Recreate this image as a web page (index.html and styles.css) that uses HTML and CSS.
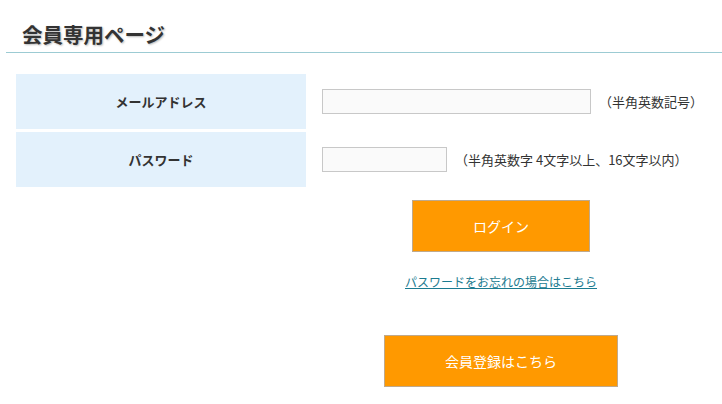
FILE: index.html
```html
<!DOCTYPE html>
<html lang="ja">
<head>
<meta charset="utf-8">
<link rel="stylesheet" href="styles.css">
</head>
<body>
<div class="page">
  <h1 class="title">会員専用ページ</h1>
  <div class="form">
    <div class="row">
      <div class="label">メールアドレス</div>
      <div class="field">
        <span class="input input-wide"></span>
        <span class="hint">（半角英数記号）</span>
      </div>
    </div>
    <div class="row">
      <div class="label">パスワード</div>
      <div class="field">
        <span class="input input-short"></span>
        <span class="hint">（半角英数字 4文字以上、16文字以内）</span>
      </div>
    </div>
  </div>
  <div class="actions">
    <div class="btn btn-login">ログイン</div>
    <a class="forgot" href="#">パスワードをお忘れの場合はこちら</a>
    <div class="btn btn-register">会員登録はこちら</div>
  </div>
</div>
</body>
</html>
```

FILE: styles.css
```css
html, body {
  margin: 0;
  padding: 0;
  background: #ffffff;
}
body {
  font-family: "Noto Sans CJK JP", "Noto Sans", sans-serif;
  color: #333333;
}
.page {
  width: 722px;
  height: 404px;
  overflow: hidden;
}
.title {
  margin: 0 0 0 6px;
  padding: 21px 0 0 16px;
  height: 31px;
  font-size: 20.5px;
  line-height: 26px;
  font-weight: bold;
  color: #333333;
  text-shadow: 1px 1px 2px #bbbbbb;
  border-bottom: 1px solid #9ccbd3;
  box-sizing: content-box;
}
.form {
  margin: 21px 0 0 16px;
  display: flex;
  flex-direction: column;
  gap: 3px;
}
.row {
  display: flex;
  height: 55px;
}
.label {
  width: 290px;
  background: #e3f1fc;
  display: flex;
  align-items: center;
  justify-content: center;
  font-size: 13px;
  font-weight: bold;
  color: #333333;
}
.field {
  display: flex;
  align-items: center;
  padding-left: 16px;
  gap: 8px;
}
.input {
  display: block;
  height: 23px;
  border: 1px solid #c8c8c8;
  background: #fafafa;
}
.input-wide { width: 267px; }
.input-short { width: 123px; }
.hint {
  font-size: 13px;
  color: #333333;
}
.actions {
  margin: 13px 0 0 322px;
  width: 358px;
  display: flex;
  flex-direction: column;
  align-items: center;
}
.btn {
  box-sizing: border-box;
  background: #ff9900;
  border: 1px solid #bfa98c;
  color: #ffffff;
  font-size: 14px;
  display: flex;
  align-items: center;
  justify-content: center;
}
.btn-login {
  width: 178px;
  height: 52px;
}
.forgot {
  margin-top: 21px;
  font-size: 12px;
  line-height: 18px;
  color: #1b7b90;
  text-decoration: underline;
}
.btn-register {
  margin-top: 44px;
  width: 234px;
  height: 52px;
}
```
